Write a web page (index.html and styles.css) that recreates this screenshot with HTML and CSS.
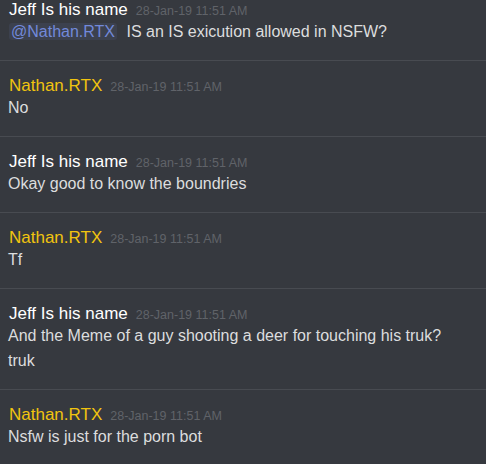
FILE: index.html
```html
<!DOCTYPE html>
<html>
<head>
<meta charset="utf-8">
<link rel="stylesheet" href="styles.css">
</head>
<body>
<div class="chat">
  <div class="group first">
    <div class="head"><span class="name white">Jeff Is his name</span><span class="time">28-Jan-19 11:51 AM</span></div>
    <div class="msg"><span class="mention">@Nathan.RTX</span> IS an IS exicution allowed in NSFW?</div>
  </div>
  <div class="group">
    <div class="head"><span class="name yellow">Nathan.RTX</span><span class="time">28-Jan-19 11:51 AM</span></div>
    <div class="msg">No</div>
  </div>
  <div class="group">
    <div class="head"><span class="name white">Jeff Is his name</span><span class="time">28-Jan-19 11:51 AM</span></div>
    <div class="msg">Okay good to know the boundries</div>
  </div>
  <div class="group">
    <div class="head"><span class="name yellow">Nathan.RTX</span><span class="time">28-Jan-19 11:51 AM</span></div>
    <div class="msg">Tf</div>
  </div>
  <div class="group">
    <div class="head"><span class="name white">Jeff Is his name</span><span class="time">28-Jan-19 11:51 AM</span></div>
    <div class="msg">And the Meme of a guy shooting a deer for touching his truk?</div>
    <div class="msg next">truk</div>
  </div>
  <div class="group">
    <div class="head"><span class="name yellow">Nathan.RTX</span><span class="time">28-Jan-19 11:51 AM</span></div>
    <div class="msg">Nsfw is just for the porn bot</div>
  </div>
</div>
</body>
</html>
```
FILE: styles.css
```css
html, body {
  margin: 0;
  padding: 0;
  background: #36393f;
  height: 100%;
  overflow: hidden;
}
body {
  font-family: "Liberation Sans", Arial, sans-serif;
}
.chat {
  display: flex;
  flex-direction: column;
}
.group {
  border-top: 1px solid #484b51;
  padding: 14px 8px 18px 8px;
}
.group.first {
  border-top: 0;
  padding-top: 0;
  margin-top: -1px;
}
.head {
  display: flex;
  align-items: baseline;
  height: 22px;
  line-height: 22px;
  white-space: nowrap;
}
.name {
  font-size: 17px;
  margin-left: 1px;
}
.white { color: #ffffff; }
.yellow { color: #f1c40f; }
.time {
  font-size: 12.5px;
  color: #606369;
  margin-left: 8px;
}
.msg {
  font-size: 16px;
  line-height: 21px;
  color: #dcddde;
  white-space: nowrap;
}
.msg.next {
  margin-top: 4px;
}
.mention {
  color: #7289da;
  background: rgba(114, 137, 218, 0.1);
  padding: 0 2px;
  margin-left: 1px;
  margin-right: 5px;
  border-radius: 3px;
}
```
